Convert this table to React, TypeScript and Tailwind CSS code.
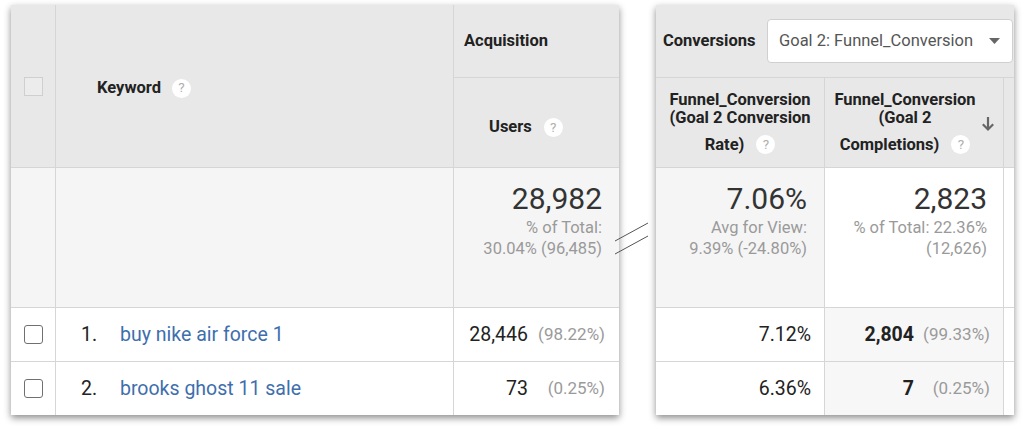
import React from "react";

const HelpIcon = () => (
  <span className="inline-flex h-[19px] w-[19px] items-center justify-center rounded-full bg-white text-[13.5px] font-normal leading-none text-[#b0b0b0]">
    ?
  </span>
);

const RowCheckbox = () => (
  <span className="block h-[19px] w-[19px] rounded-[3px] border-[1.5px] border-[#707070] bg-white" />
);

const SortArrow = () => (
  <svg width="14" height="16" viewBox="0 0 14 16" fill="none">
    <path d="M7 1v12.5M1.8 8.3l5.2 5.2 5.2-5.2" stroke="#666" strokeWidth="2.2" />
  </svg>
);

type Row = { n: number; keyword: string; users: string; usersPct: string; rate: string; done: string; donePct: string };

const rows: Row[] = [
  { n: 1, keyword: "buy nike air force 1", users: "28,446", usersPct: "(98.22%)", rate: "7.12%", done: "2,804", donePct: "(99.33%)" },
  { n: 2, keyword: "brooks ghost 11 sale", users: "73", usersPct: "(0.25%)", rate: "6.36%", done: "7", donePct: "(0.25%)" },
];

export default function App() {
  return (
    <div className="relative h-[432px] w-[1024px] overflow-hidden bg-white font-['Roboto',sans-serif] text-[#222]">
      <div className="flex gap-[37px] pl-[11px] pt-[5px]">
        {/* left table */}
        <div className="grid grid-cols-[44px_397px_165px] grid-rows-[72px_89px_139px_53px_53px] gap-px bg-[#d6d6d6] shadow-[0_3px_7px_rgba(0,0,0,0.45)]">
          <div className="row-span-2 flex items-center justify-center bg-[#e8e8e8]">
            <span className="block h-[19px] w-[19px] border border-[#cfcfcf] bg-[#ececec]" />
          </div>
          <div className="row-span-2 flex items-center gap-[11px] bg-[#e8e8e8] pl-[41px] pt-[4px] text-[16.5px] font-bold">
            Keyword <HelpIcon />
          </div>
          <div className="flex items-center bg-[#e8e8e8] pl-[10px] text-[16.5px] font-bold">Acquisition</div>
          <div className="flex items-center gap-[12px] bg-[#e8e8e8] pl-[35px] pt-[10px] text-[16.5px] font-bold">
            Users <HelpIcon />
          </div>

          <div className="bg-[#f5f5f5]" />
          <div className="bg-[#f5f5f5]" />
          <div className="flex flex-col items-end bg-[#f5f5f5] pr-[17px] pt-[13px] text-right">
            <span className="text-[30px] leading-[36px] text-[#333]">28,982</span>
            <span className="text-[16.5px] leading-[21px] text-[#9a9a9a]">% of Total:</span>
            <span className="text-[16.5px] leading-[21px] text-[#9a9a9a]">30.04% (96,485)</span>
          </div>

          {rows.map((r) => (
            <React.Fragment key={r.n}>
              <div className="flex items-center justify-center bg-white">
                <RowCheckbox />
              </div>
              <div className="flex items-center bg-white pl-[25px] text-[19.5px]">
                <span className="w-[39px]">{r.n}.</span>
                <span className="text-[#3e6ead]">{r.keyword}</span>
              </div>
              <div className="flex items-center justify-end bg-white pr-[14px] text-[19.5px]">
                <span>{r.users}</span>
                <span className="w-[77px] text-right text-[17px] text-[#9a9a9a]">{r.usersPct}</span>
              </div>
            </React.Fragment>
          ))}
        </div>

        {/* right table */}
        <div className="grid grid-cols-[168px_178px_10px] grid-rows-[72px_89px_139px_53px_53px] gap-px bg-[#d6d6d6] shadow-[0_3px_7px_rgba(0,0,0,0.45)]">
          <div className="col-span-3 flex items-center justify-between bg-[#e8e8e8] pl-[7px] pr-px">
            <span className="text-[16.5px] font-bold">Conversions</span>
            <div className="flex h-[44px] w-[246px] items-center justify-between rounded-[4px] border border-[#d0d0d0] bg-white pl-[11px] pr-[12px] text-[16.5px] text-[#555]">
              Goal 2: Funnel_Conversion
              <svg width="11" height="6" viewBox="0 0 11 6">
                <path d="M0 0h11L5.5 6z" fill="#666" />
              </svg>
            </div>
          </div>

          <div className="flex flex-col items-center bg-[#e8e8e8] pt-[13px] text-center text-[16.5px] font-bold leading-[18px]">
            <span>Funnel_Conversion</span>
            <span>(Goal 2 Conversion</span>
            <span className="mt-[8px] flex items-center gap-[12px]">
              Rate) <HelpIcon />
            </span>
          </div>
          <div className="flex items-center bg-[#e8e8e8] pl-[4px] pr-[8px]">
            <div className="flex flex-1 flex-col items-center self-start pt-[13px] text-center text-[16.5px] font-bold leading-[18px]">
              <span>Funnel_Conversion</span>
              <span>(Goal 2</span>
              <span className="mt-[8px] flex items-center gap-[12px]">
                Completions) <HelpIcon />
              </span>
            </div>
            <span className="pt-[2px]">
              <SortArrow />
            </span>
          </div>
          <div className="bg-[#e8e8e8]" />

          <div className="flex flex-col items-end bg-[#f5f5f5] pr-[17px] pt-[13px] text-right">
            <span className="text-[30px] leading-[36px] text-[#333]">7.06%</span>
            <span className="text-[16.5px] leading-[21px] text-[#9a9a9a]">Avg for View:</span>
            <span className="text-[16.5px] leading-[21px] text-[#9a9a9a]">9.39% (-24.80%)</span>
          </div>
          <div className="flex flex-col items-end bg-white pr-[16px] pt-[13px] text-right">
            <span className="text-[30px] leading-[36px] text-[#333]">2,823</span>
            <span className="text-[16.5px] leading-[21px] text-[#9a9a9a]">% of Total: 22.36%</span>
            <span className="text-[16.5px] leading-[21px] text-[#9a9a9a]">(12,626)</span>
          </div>
          <div className="bg-white" />

          {rows.map((r) => (
            <React.Fragment key={r.n}>
              <div className="flex items-center justify-end bg-white pr-[13px] text-[19.5px]">{r.rate}</div>
              <div className="flex items-center justify-end bg-[#f7f7f7] pr-[13px] text-[19.5px]">
                <span className="font-bold">{r.done}</span>
                <span className="w-[76px] text-right text-[17px] text-[#9a9a9a]">{r.donePct}</span>
              </div>
              <div className="bg-white" />
            </React.Fragment>
          ))}
        </div>
      </div>

      {/* break marks between the two tables */}
      <svg className="absolute left-[612px] top-[218px]" width="40" height="40" viewBox="0 0 40 40">
        <path d="M3 23L36 5M3 36L36 18" stroke="#555" strokeWidth="1" />
      </svg>
    </div>
  );
}
